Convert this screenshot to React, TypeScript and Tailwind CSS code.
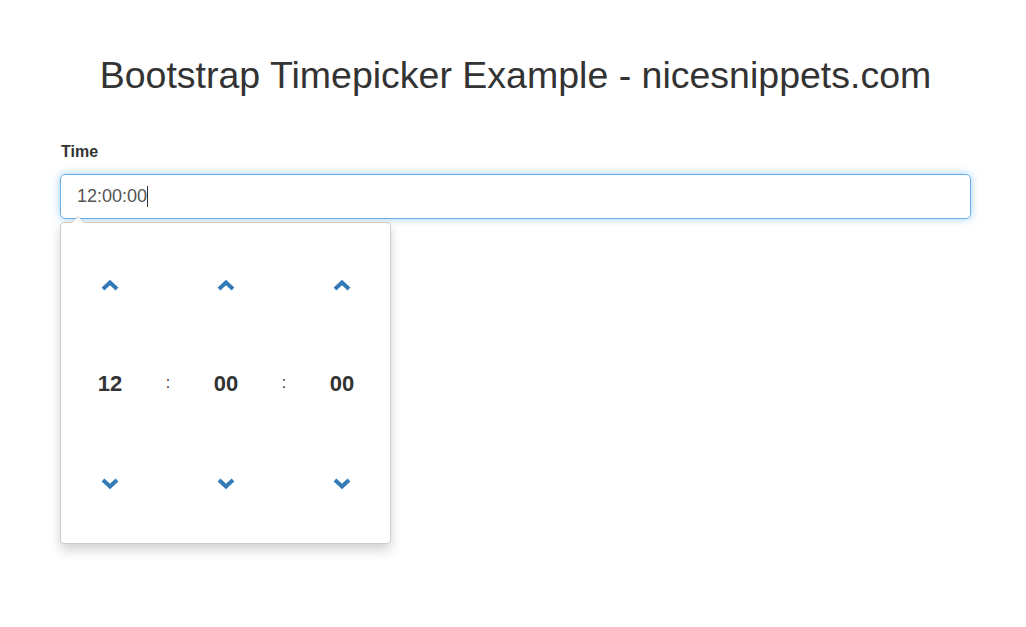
import React from "react";

function Up() {
  return (
    <svg width="18" height="12" viewBox="0 0 18 12">
      <path d="M2 10 L9 3.5 L16 10" fill="none" stroke="#337ab7" strokeWidth="4" strokeLinejoin="miter" strokeLinecap="butt" />
    </svg>
  );
}
function Down() {
  return (
    <svg width="18" height="12" viewBox="0 0 18 12">
      <path d="M2 2 L9 8.5 L16 2" fill="none" stroke="#337ab7" strokeWidth="4" strokeLinejoin="miter" strokeLinecap="butt" />
    </svg>
  );
}

export default function App() {
  const cols = ["12", ":", "00", ":", "00"];
  return (
    <div className="min-h-[627px] bg-white text-[#333]" style={{ fontFamily: '"Liberation Sans", Arial, sans-serif' }}>
      <div className="pl-[60px] pr-[55px] pt-[50px]">
        <h1 className="text-center text-[37.5px] leading-[50px] font-normal text-[#333]">
          Bootstrap Timepicker Example - nicesnippets.com
        </h1>
        <div className="mt-[41px]">
          <label className="block text-[16px] font-bold leading-[22px] pl-[1px] text-[#333]">Time</label>
          <div className="relative mt-[11px]">
            <div className="h-[45px] rounded-[5px] border border-[#66afe9] shadow-[0_0_8px_rgba(102,175,233,0.6)] flex items-center pl-[16px] text-[18px] text-[#555]">
              <span>12:00:00</span>
              <span className="inline-block w-[1px] h-[21px] bg-[#333]"></span>
            </div>
            <div className="absolute left-0 top-[48px] w-[331px] h-[322px] bg-white border border-[#ccc] rounded-[4px] shadow-[0_6px_12px_rgba(0,0,0,0.175)] pt-[13px] pl-[20px]">
              <div className="absolute left-[10px] -top-[7px] w-0 h-0 border-l-[7px] border-r-[7px] border-b-[7px] border-l-transparent border-r-transparent border-b-[#ccc]"></div>
              <div className="absolute left-[11px] -top-[6px] w-0 h-0 border-l-[6px] border-r-[6px] border-b-[6px] border-l-transparent border-r-transparent border-b-white"></div>
              <div className="grid grid-cols-[58px_58px_58px_58px_58px] grid-rows-[98px_98px_104px]">
                {cols.map((c, i) => (
                  <div key={"u" + i} className="flex items-center justify-center">
                    {c !== ":" && <Up />}
                  </div>
                ))}
                {cols.map((c, i) => (
                  <div key={"m" + i} className="flex items-center justify-center">
                    {c === ":" ? (
                      <span className="text-[16px] text-[#333]">:</span>
                    ) : (
                      <span className="text-[22px] font-bold text-[#333]">{c}</span>
                    )}
                  </div>
                ))}
                {cols.map((c, i) => (
                  <div key={"d" + i} className="flex items-center justify-center">
                    {c !== ":" && <Down />}
                  </div>
                ))}
              </div>
            </div>
          </div>
        </div>
      </div>
    </div>
  );
}
